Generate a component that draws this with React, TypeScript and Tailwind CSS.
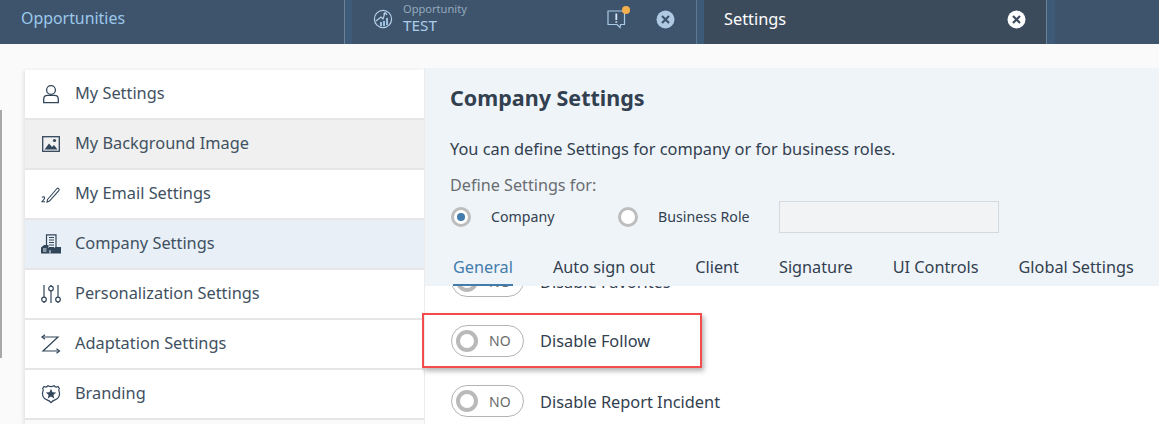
import { ReactNode } from "react";

const font = { fontFamily: '"Noto Sans", "Open Sans", sans-serif' };

const CloseIcon = ({ bg, fg }: { bg: string; fg: string }) => (
  <svg width="19" height="19" viewBox="0 0 19 19">
    <circle cx="9.5" cy="9.5" r="9" fill={bg} />
    <path d="M6 6l7 7M13 6l-7 7" stroke={fg} strokeWidth="2.2" />
  </svg>
);

const OppIcon = () => (
  <svg width="20" height="20" viewBox="0 0 20 20" fill="none" stroke="#b5d0e8" strokeWidth="1.2">
    <circle cx="10" cy="10" r="8.6" />
    <path d="M3 12l5-4 2 2 2-6M10.500 5.500L12.300 3.500l1.700 2.300" />
    <path d="M8 17v-4M11 17v-5M14 16V9" strokeWidth="2" stroke="#9cc0e0" />
  </svg>
);

const icons: Record<string, ReactNode> = {
  user: (
    <svg width="18" height="20" viewBox="0 0 18 20" fill="none" stroke="#32465a" strokeWidth="1.3">
      <circle cx="9" cy="6" r="4.4" />
      <path d="M1.7 18.6v-3.4c0-2.2 1.6-3.800 3.800-3.800h7c2.200 0 3.800 1.600 3.800 3.800v3.400z" />
    </svg>
  ),
  image: (
    <svg width="18" height="16" viewBox="0 0 18 16" fill="none">
      <rect x=".7" y=".7" width="16.6" height="14.6" stroke="#32465a" strokeWidth="1.3" />
      <path d="M2.500 13.500l4.500-6 3 3.500 2-2 3.500 4.500z" fill="#32465a" />
      <circle cx="12.500" cy="4.500" r="1.600" fill="#32465a" />
    </svg>
  ),
  pen: (
    <svg width="20" height="18" viewBox="0 0 20 18" fill="none" stroke="#32465a" strokeWidth="1.1">
      <path d="M6.500 14.500L16 3.500c.8-.9 2.800.8 2 1.800L8.500 16l-2.500 1z" />
      <path d="M1 12.500c1-1.200 3-.8 2.500.8-.4 1.200-2 2.400-2.500 3.400h3" />
    </svg>
  ),
  building: (
    <svg width="20" height="20" viewBox="0 0 20 20" fill="none">
      <path d="M5.500 11V.8h9.500V14" stroke="#32465a" strokeWidth="1.200" />
      <path d="M8 3.500h5M8 6h5M8 8.500h5M8 11h5M8 13.500h5" stroke="#32465a" strokeWidth="1.100" />
      <path d="M0 19.500v-6l3-2.500h4.500v3H13l1.500-1H20v6.500z" fill="#32465a" />
      <path d="M2 15h3.500M2 17h3.500M9 16v3.500" stroke="#e8eff7" />
    </svg>
  ),
  sliders: (
    <svg width="20" height="20" viewBox="0 0 20 20" fill="none" stroke="#32465a" strokeWidth="1.2">
      <path d="M3 1v12M3 18v1M10 1v1M10 7v12M17 1v12M17 18v1" />
      <circle cx="3" cy="15.500" r="2.300" />
      <circle cx="10" cy="4.500" r="2.300" />
      <circle cx="17" cy="15.500" r="2.300" />
    </svg>
  ),
  adapt: (
    <svg width="20" height="20" viewBox="0 0 20 20" fill="none" stroke="#32465a" strokeWidth="1.2">
      <path d="M1 3h16L2 17h16" />
      <path d="M4 .8L1 3l3 2.200M15.500 14.800l3 2.200-3 2.200" />
    </svg>
  ),
  badge: (
    <svg width="20" height="20" viewBox="0 0 20 20" fill="none">
      <path d="M3 2.500c1.500.8 3 .6 4-.8 1.800 1 4.200 1 6 0 1 1.400 2.500 1.600 4 .8l1.300 2c-.8 1-.8 2 0 3.500 1 3-.6 6.600-3.800 7.600-1.800.6-3 1-4.500 3-1.500-2-2.700-2.400-4.500-3C2.300 14.600.7 11 1.700 8c.8-1.500.8-2.500 0-3.500z" stroke="#32465a" strokeWidth="1.200" />
      <path d="M10 4.800l1.500 3.400 3.700.3-2.800 2.400.9 3.600-3.300-1.900-3.300 1.900.9-3.600-2.800-2.400 3.700-.3z" fill="#32465a" />
    </svg>
  ),
};

const menu = [
  { label: "My Settings", icon: "user", bg: "bg-white" },
  { label: "My Background Image", icon: "image", bg: "bg-[#f0f0f0]" },
  { label: "My Email Settings", icon: "pen", bg: "bg-white" },
  { label: "Company Settings", icon: "building", bg: "bg-[#e8eff7]" },
  { label: "Personalization Settings", icon: "sliders", bg: "bg-white" },
  { label: "Adaptation Settings", icon: "adapt", bg: "bg-white" },
  { label: "Branding", icon: "badge", bg: "bg-white" },
];

const tabs = ["General", "Auto sign out", "Client", "Signature", "UI Controls", "Global Settings"];

const Toggle = ({ label }: { label: string }) => (
  <div className="flex items-center h-8">
    <div className="w-[73px] h-8 rounded-full border border-[#b4b4b4] bg-white flex items-center pl-[4px] shrink-0">
      <span className="w-[22px] h-[22px] rounded-full border-[4px] border-[#b9b9b9] bg-white" />
      <span className="ml-[11px] text-[14px] text-[#6b6b6b]">NO</span>
    </div>
    <span className="ml-4 pt-[2px] text-[16.35px] text-[#32404f] whitespace-nowrap">{label}</span>
  </div>
);

const Radio = ({ checked }: { checked?: boolean }) => (
  <span className="w-5 h-5 rounded-full border-[3px] border-[#bdbdbd] bg-white flex items-center justify-center shrink-0">
    {checked && <span className="w-2 h-2 rounded-full bg-[#427cac]" />}
  </span>
);

const App = () => {
  return (
    <div className="w-[1159px] h-[424px] overflow-hidden bg-[#fafafa] relative" style={font}>
      <header className="h-11 flex bg-[#3e546d] pl-px">
        <div className="w-[344px] flex items-center pl-5 pb-[6px] text-[15.9px] text-[#9cc8ec] border-r border-[#6c8196]">
          Opportunities
        </div>
        <div className="w-[7px] bg-[#3e5a79]" />
        <div className="w-[344px] flex items-center pl-[21px] pr-[21px] pb-[6px]">
          <OppIcon />
          <div className="ml-[10px] mb-[2px] flex flex-col">
            <span className="text-[11.1px] text-[#94a9bb] leading-[14px]">Opportunity</span>
            <span className="text-[15.3px] text-[#a9cdea] leading-[18px]">TEST</span>
          </div>
          <div className="ml-auto relative mr-[29px]">
            <svg width="20" height="20" viewBox="0 0 20 20" fill="none" stroke="#a9c9e4" strokeWidth="1.2">
              <path d="M1 2h16.500v13.500h-4l-.5 3-3-3H1z" />
              <path d="M9.300 4.500v6.500M9.300 12.300v1.500" stroke="#d6e6f3" strokeWidth="1.800" />
            </svg>
            <span className="absolute -top-[3px] right-[-3px] w-2 h-2 rounded-full bg-[#f5b04d]" />
          </div>
          <CloseIcon bg="#afc9e2" fg="#3e546d" />
        </div>
        <div className="w-[8px] bg-[#3e5a79] border-l border-[#5f7890]" />
        <div className="w-[342px] bg-[#3c4b5c] flex items-center pl-[20px] pr-[20px] pb-[6px] text-[16.35px] text-white">
          Settings
          <span className="ml-auto flex">
            <CloseIcon bg="#ffffff" fg="#3c4b5c" />
          </span>
        </div>
        <div className="w-[9px] bg-[#3e5a79] border-l border-[#6c8196]" />
      </header>

      <div className="flex pl-[25px] pt-[24px]">
        <nav className="w-[399px] mt-[2px] shrink-0 shadow-[-2px_0_3px_rgba(0,0,0,0.08)]">
          {menu.map((m) => (
            <div
              key={m.label}
              className={`h-[50px] flex items-center border-b-2 border-[#e6e6e6] ${m.bg}`}
            >
              <span className="w-[50px] flex justify-center pl-[6px] pr-[5px]">{icons[m.icon]}</span>
              <span className="pb-[2px] text-[16.35px] text-[#3f5161] whitespace-nowrap">{m.label}</span>
            </div>
          ))}
        </nav>

        <main className="flex-1 min-w-0 bg-white border-l border-[#ececec]">
          <section className="h-[218px] bg-[#eff4f9] pl-[25px] flex flex-col">
            <h1 className="mt-[15px] text-[21.5px] font-bold text-[#32404f] leading-[30px]">
              Company Settings
            </h1>
            <p className="mt-[25px] text-[16.35px] text-[#32404f] leading-[22px]">
              You can define Settings for company or for business roles.
            </p>
            <p className="mt-[14px] text-[16.2px] text-[#6a6d70] leading-[22px]">Define Settings for:</p>
            <div className="mt-[5px] pl-px flex items-center">
              <Radio checked />
              <span className="ml-[20px] text-[14.2px] text-[#32404f] w-[127px]">Company</span>
              <Radio />
              <span className="ml-[20px] text-[14.2px] text-[#32404f] w-[121px]">Business Role</span>
              <span className="w-[220px] h-8 border border-[#d5d9dd] bg-[#f2f3f4]" />
            </div>
            <div className="mt-[19px] flex gap-[40px] pl-[3px] text-[16.25px] leading-[30px] text-[#32404f]">
              {tabs.map((t, i) => (
                <span
                  key={t}
                  className={
                    i === 0
                      ? "text-[#427cac] border-b-2 border-[#427cac] whitespace-nowrap h-[34px]"
                      : "whitespace-nowrap"
                  }
                >
                  {t}
                </span>
              ))}
            </div>
          </section>
          <div className="relative h-[140px] -ml-[3px] overflow-hidden pl-[29px]">
            <div className="-mt-[21px] flex flex-col">
              <Toggle label="Disable Favorites" />
              <div className="-ml-[29px] mt-[16px] w-[280px] h-[55px] pl-[27px] flex items-center border-2 border-[#f44c4c] shadow-[2px_3px_5px_rgba(0,0,0,0.3)]">
                <Toggle label="Disable Follow" />
              </div>
              <div className="mt-[17px]">
                <Toggle label="Disable Report Incident" />
              </div>
            </div>
          </div>
        </main>
      </div>
      <div className="absolute left-0 top-[110px] w-[2px] h-[248px] bg-[#a8a8a8]" />
    </div>
  );
};

export default App;
